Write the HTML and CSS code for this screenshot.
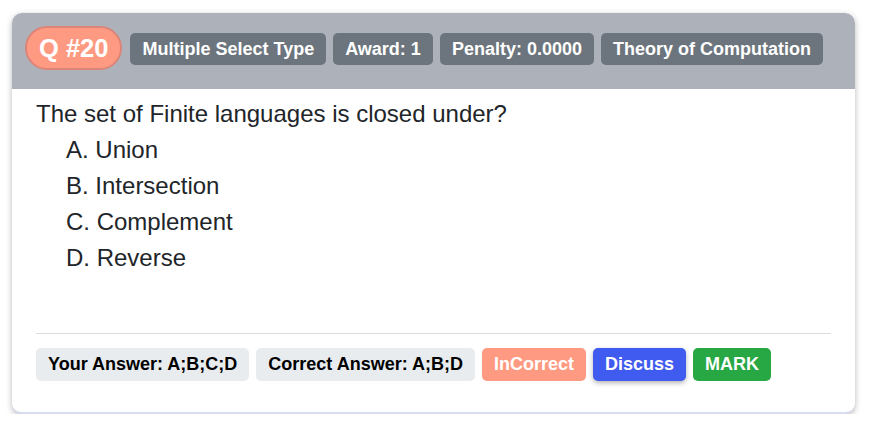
FILE: index.html
```html
<!DOCTYPE html>
<html>
<head>
<meta charset="utf-8">
<link rel="stylesheet" href="styles.css">
</head>
<body>
<div class="card">
  <div class="card-header">
    <span class="qnum">Q #20</span>
    <span class="badge">Multiple Select Type</span>
    <span class="badge">Award: 1</span>
    <span class="badge">Penalty: 0.0000</span>
    <span class="badge">Theory of Computation</span>
  </div>
  <div class="card-body">
    <p class="question">The set of Finite languages is closed under?</p>
    <ol class="options">
      <li>A. Union</li>
      <li>B. Intersection</li>
      <li>C. Complement</li>
      <li>D. Reverse</li>
    </ol>
    <hr class="divider">
    <div class="footer">
      <span class="chip">Your Answer: A;B;C;D</span>
      <span class="chip">Correct Answer: A;B;D</span>
      <span class="btn btn-incorrect">InCorrect</span>
      <span class="btn btn-discuss">Discuss</span>
      <span class="btn btn-mark">MARK</span>
    </div>
  </div>
</div>
</body>
</html>
```
FILE: styles.css
```css
html, body {
  margin: 0;
  padding: 0;
  background: #ffffff;
  font-family: "Liberation Sans", Arial, sans-serif;
}
body {
  padding: 13px 16px 0 12px;
}
.card {
  width: 843px;
  border-radius: 10px;
  overflow: hidden;
  background: #fff;
  box-shadow: 0 2px 6px rgba(0, 0, 0, 0.28);
  border-bottom: 2px solid #d9dcf0;
  box-sizing: border-box;
}
.card-header {
  background: #adb1b9;
  height: 76px;
  box-sizing: border-box;
  padding: 13px 13px 0 13px;
  display: flex;
  align-items: flex-start;
  gap: 7px;
}
.qnum {
  display: inline-flex;
  align-items: center;
  height: 44px;
  box-sizing: border-box;
  padding: 0 12px;
  border: 2px solid #dd8478;
  background: #ff9a82;
  color: #fff;
  font-weight: bold;
  font-size: 25.5px;
  border-radius: 22px;
  margin-right: 1px;
}
.badge {
  display: inline-flex;
  align-items: center;
  margin-top: 7px;
  height: 32px;
  padding: 0 12px;
  box-sizing: border-box;
  background: #6c757d;
  color: #fff;
  font-weight: bold;
  font-size: 18px;
  border-radius: 5px;
}
.card-body {
  padding: 7px 24px 31px 24px;
}
.question {
  margin: 0;
  font-size: 24px;
  line-height: 36px;
  color: #212529;
}
.options {
  list-style: none;
  margin: 0;
  padding: 0 0 0 30px;
  font-size: 24px;
  line-height: 36px;
  color: #212529;
}
.divider {
  border: 0;
  border-top: 1px solid #dcdcdc;
  margin: 57px 0 14px 0;
}
.footer {
  display: flex;
  gap: 7px;
}
.chip, .btn {
  display: inline-flex;
  align-items: center;
  height: 33px;
  box-sizing: border-box;
  padding: 0 12px;
  font-weight: bold;
  font-size: 18px;
  border-radius: 5px;
}
.chip {
  background: #e9ecef;
  color: #000;
}
.btn {
  color: #fff;
}
.btn-incorrect {
  background: #ff9a82;
}
.btn-discuss {
  background: #3f5bf0;
  box-shadow: 0 2px 5px rgba(0, 0, 0, 0.3);
}
.btn-mark {
  background: #28a745;
}
```
